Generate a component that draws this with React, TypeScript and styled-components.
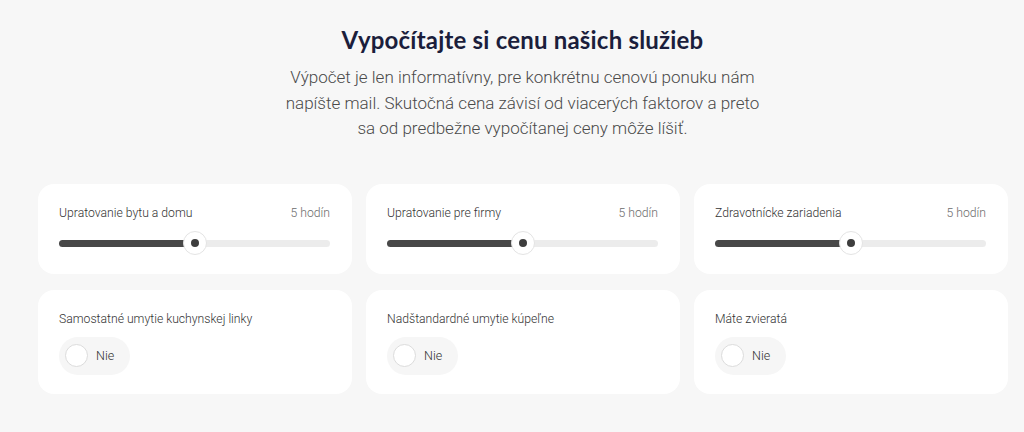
import styled, { createGlobalStyle } from 'styled-components';

const GlobalStyle = createGlobalStyle`
  html, body {
    margin: 0;
    padding: 0;
    background: #f7f7f7;
  }
  * {
    box-sizing: border-box;
  }
`;

interface sliderItem {
  label: string;
  hours: number;
  percent: number;
}

interface toggleItem {
  label: string;
}

const sliders: sliderItem[] = [
  { label: 'Upratovanie bytu a domu', hours: 5, percent: 50 },
  { label: 'Upratovanie pre firmy', hours: 5, percent: 50 },
  { label: 'Zdravotnícke zariadenia', hours: 5, percent: 50 },
];

const toggles: toggleItem[] = [
  { label: 'Samostatné umytie kuchynskej linky' },
  { label: 'Nadštandardné umytie kúpeľne' },
  { label: 'Máte zvieratá' },
];

export default function App() {
  return (
    <Page>
      <GlobalStyle />
      <Header>
        <Title>Vypočítajte si cenu našich služieb</Title>
        <Subtitle>
          Výpočet je len informatívny, pre konkrétnu cenovú ponuku nám napíšte
          mail. Skutočná cena závisí od viacerých faktorov a preto sa od
          predbežne vypočítanej ceny môže líšiť.
        </Subtitle>
      </Header>
      <Grid>
        {sliders.map((item) => (
          <SliderCard key={item.label}>
            <CardHead>
              <Label>{item.label}</Label>
              <Hours>{item.hours} hodín</Hours>
            </CardHead>
            <Track>
              <Fill style={{ width: `${item.percent}%` }} />
              <Thumb style={{ left: `${item.percent}%` }} />
            </Track>
          </SliderCard>
        ))}
        {toggles.map((item) => (
          <ToggleCard key={item.label}>
            <Label>{item.label}</Label>
            <Toggle>
              <Radio />
              <ToggleText>Nie</ToggleText>
            </Toggle>
          </ToggleCard>
        ))}
      </Grid>
    </Page>
  );
}

const Page = styled.div`
  width: 1024px;
  height: 432px;
  overflow: hidden;
  background: #f7f7f7;
  padding: 24px 17px 0 38px;
`;

const Header = styled.div`
  display: flex;
  flex-direction: column;
  align-items: center;
`;

const Title = styled.h1`
  margin: 0;
  font-family: 'Lato', 'Noto Sans', sans-serif;
  font-weight: 700;
  font-size: 24px;
  line-height: 32px;
  color: #1b1e3c;
  letter-spacing: 0.2px;
`;

const Subtitle = styled.p`
  margin: 9px 0 0;
  width: 480px;
  text-align: center;
  font-family: 'Roboto', sans-serif;
  font-weight: 300;
  font-size: 17px;
  line-height: 25.5px;
  color: #4a4a4a;
`;

const Grid = styled.div`
  display: grid;
  grid-template-columns: repeat(3, 314px);
  grid-template-rows: 90px 104px;
  column-gap: 14px;
  row-gap: 16px;
  margin-top: 42px;
`;

const Card = styled.div`
  background: #ffffff;
  border-radius: 16px;
  padding: 0 22px 0 21px;
`;

const SliderCard = styled(Card)`
  padding-top: 21px;
`;

const ToggleCard = styled(Card)`
  padding-top: 21px;
`;

const CardHead = styled.div`
  display: flex;
  justify-content: space-between;
  align-items: center;
`;

const Label = styled.div`
  font-family: 'Roboto', sans-serif;
  font-weight: 300;
  font-size: 12.2px;
  line-height: 16px;
  color: #333;
`;

const Hours = styled.div`
  font-family: 'Roboto', sans-serif;
  font-weight: 300;
  font-size: 12.2px;
  line-height: 16px;
  color: #6b6b6b;
`;

const Track = styled.div`
  position: relative;
  height: 7px;
  margin-top: 19px;
  border-radius: 4px;
  background: #ececec;
`;

const Fill = styled.div`
  height: 100%;
  border-radius: 4px 0 0 4px;
  background: #484848;
`;

const Thumb = styled.div`
  position: absolute;
  top: 50%;
  width: 24px;
  height: 24px;
  transform: translate(-50%, -50%);
  border-radius: 50%;
  background: #fff;
  border: 1px solid #e4e4e4;
  &::after {
    content: '';
    position: absolute;
    left: 50%;
    top: 50%;
    width: 8px;
    height: 8px;
    transform: translate(-50%, -50%);
    border-radius: 50%;
    background: #3d3d3d;
  }
`;

const Toggle = styled.div`
  display: inline-flex;
  align-items: center;
  gap: 8px;
  height: 38px;
  margin-top: 10px;
  padding: 0 16px 0 6px;
  border-radius: 19px;
  background: #f6f6f6;
`;

const Radio = styled.span`
  width: 23px;
  height: 23px;
  border-radius: 50%;
  background: #fff;
  border: 1px solid #dcdcdc;
`;

const ToggleText = styled.span`
  font-family: 'Roboto', sans-serif;
  font-weight: 300;
  font-size: 12.5px;
  color: #333;
`;
